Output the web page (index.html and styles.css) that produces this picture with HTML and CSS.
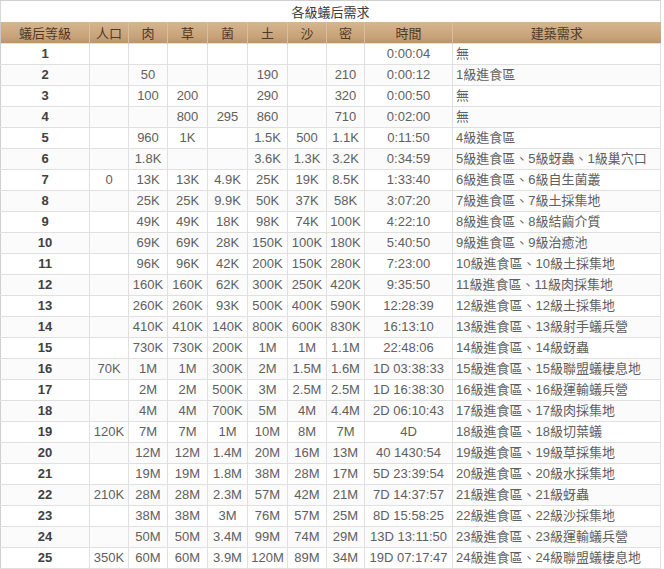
FILE: index.html
```html
<!DOCTYPE html>
<html lang="zh-Hant">
<head>
<meta charset="utf-8">
<title>各級蟻后需求</title>
<link rel="stylesheet" href="styles.css">
</head>
<body>
<table class="req">
  <colgroup>
    <col class="c-lv"><col class="c-n"><col class="c-n"><col class="c-n2"><col class="c-n2"><col class="c-n2"><col class="c-n"><col class="c-h"><col class="c-t"><col class="c-b">
  </colgroup>
  <thead>
    <tr class="title-row"><th colspan="10" class="title">各級蟻后需求</th></tr>
    <tr class="head-row">
      <th>蟻后等級</th><th>人口</th><th>肉</th><th>草</th><th>菌</th><th>土</th><th>沙</th><th>密</th><th>時間</th><th>建築需求</th>
    </tr>
  </thead>
  <tbody>
    <tr><td class="lv">1</td><td></td><td></td><td></td><td></td><td></td><td></td><td></td><td>0:00:04</td><td class="bd">無</td></tr>
    <tr><td class="lv">2</td><td></td><td>50</td><td></td><td></td><td>190</td><td></td><td>210</td><td>0:00:12</td><td class="bd">1級進食區</td></tr>
    <tr><td class="lv">3</td><td></td><td>100</td><td>200</td><td></td><td>290</td><td></td><td>320</td><td>0:00:50</td><td class="bd">無</td></tr>
    <tr><td class="lv">4</td><td></td><td></td><td>800</td><td>295</td><td>860</td><td></td><td>710</td><td>0:02:00</td><td class="bd">無</td></tr>
    <tr><td class="lv">5</td><td></td><td>960</td><td>1K</td><td></td><td>1.5K</td><td>500</td><td>1.1K</td><td>0:11:50</td><td class="bd">4級進食區</td></tr>
    <tr><td class="lv">6</td><td></td><td>1.8K</td><td></td><td></td><td>3.6K</td><td>1.3K</td><td>3.2K</td><td>0:34:59</td><td class="bd">5級進食區、5級蚜蟲、1級巢穴口</td></tr>
    <tr><td class="lv">7</td><td>0</td><td>13K</td><td>13K</td><td>4.9K</td><td>25K</td><td>19K</td><td>8.5K</td><td>1:33:40</td><td class="bd">6級進食區、6級自生菌叢</td></tr>
    <tr><td class="lv">8</td><td></td><td>25K</td><td>25K</td><td>9.9K</td><td>50K</td><td>37K</td><td>58K</td><td>3:07:20</td><td class="bd">7級進食區、7級土採集地</td></tr>
    <tr><td class="lv">9</td><td></td><td>49K</td><td>49K</td><td>18K</td><td>98K</td><td>74K</td><td>100K</td><td>4:22:10</td><td class="bd">8級進食區、8級結繭介質</td></tr>
    <tr><td class="lv">10</td><td></td><td>69K</td><td>69K</td><td>28K</td><td>150K</td><td>100K</td><td>180K</td><td>5:40:50</td><td class="bd">9級進食區、9級治癒池</td></tr>
    <tr><td class="lv">11</td><td></td><td>96K</td><td>96K</td><td>42K</td><td>200K</td><td>150K</td><td>280K</td><td>7:23:00</td><td class="bd">10級進食區、10級土採集地</td></tr>
    <tr><td class="lv">12</td><td></td><td>160K</td><td>160K</td><td>62K</td><td>300K</td><td>250K</td><td>420K</td><td>9:35:50</td><td class="bd">11級進食區、11級肉採集地</td></tr>
    <tr><td class="lv">13</td><td></td><td>260K</td><td>260K</td><td>93K</td><td>500K</td><td>400K</td><td>590K</td><td>12:28:39</td><td class="bd">12級進食區、12級土採集地</td></tr>
    <tr><td class="lv">14</td><td></td><td>410K</td><td>410K</td><td>140K</td><td>800K</td><td>600K</td><td>830K</td><td>16:13:10</td><td class="bd">13級進食區、13級射手蟻兵營</td></tr>
    <tr><td class="lv">15</td><td></td><td>730K</td><td>730K</td><td>200K</td><td>1M</td><td>1M</td><td>1.1M</td><td>22:48:06</td><td class="bd">14級進食區、14級蚜蟲</td></tr>
    <tr><td class="lv">16</td><td>70K</td><td>1M</td><td>1M</td><td>300K</td><td>2M</td><td>1.5M</td><td>1.6M</td><td>1D 03:38:33</td><td class="bd">15級進食區、15級聯盟蟻棲息地</td></tr>
    <tr><td class="lv">17</td><td></td><td>2M</td><td>2M</td><td>500K</td><td>3M</td><td>2.5M</td><td>2.5M</td><td>1D 16:38:30</td><td class="bd">16級進食區、16級運輸蟻兵營</td></tr>
    <tr><td class="lv">18</td><td></td><td>4M</td><td>4M</td><td>700K</td><td>5M</td><td>4M</td><td>4.4M</td><td>2D 06:10:43</td><td class="bd">17級進食區、17級肉採集地</td></tr>
    <tr><td class="lv">19</td><td>120K</td><td>7M</td><td>7M</td><td>1M</td><td>10M</td><td>8M</td><td>7M</td><td>4D</td><td class="bd">18級進食區、18級切葉蟻</td></tr>
    <tr><td class="lv">20</td><td></td><td>12M</td><td>12M</td><td>1.4M</td><td>20M</td><td>16M</td><td>13M</td><td>40 1430:54</td><td class="bd">19級進食區、19級草採集地</td></tr>
    <tr><td class="lv">21</td><td></td><td>19M</td><td>19M</td><td>1.8M</td><td>38M</td><td>28M</td><td>17M</td><td>5D 23:39:54</td><td class="bd">20級進食區、20級水採集地</td></tr>
    <tr><td class="lv">22</td><td>210K</td><td>28M</td><td>28M</td><td>2.3M</td><td>57M</td><td>42M</td><td>21M</td><td>7D 14:37:57</td><td class="bd">21級進食區、21級蚜蟲</td></tr>
    <tr><td class="lv">23</td><td></td><td>38M</td><td>38M</td><td>3M</td><td>76M</td><td>57M</td><td>25M</td><td>8D 15:58:25</td><td class="bd">22級進食區、22級沙採集地</td></tr>
    <tr><td class="lv">24</td><td></td><td>50M</td><td>50M</td><td>3.4M</td><td>99M</td><td>74M</td><td>29M</td><td>13D 13:11:50</td><td class="bd">23級進食區、23級運輸蟻兵營</td></tr>
    <tr><td class="lv">25</td><td>350K</td><td>60M</td><td>60M</td><td>3.9M</td><td>120M</td><td>89M</td><td>34M</td><td>19D 07:17:47</td><td class="bd">24級進食區、24級聯盟蟻棲息地</td></tr>
  </tbody>
</table>
</body>
</html>
```

FILE: styles.css
```css
html, body {
  margin: 0;
  padding: 0;
  background: #ffffff;
}

.req {
  border-collapse: collapse;
  table-layout: fixed;
  width: 661px;
  margin: 0;
  font-family: "Liberation Sans", "Noto Sans CJK TC", sans-serif;
  font-size: 13px;
  color: #606060;
}

.c-lv { width: 89px; }
.c-n { width: 39px; }
.c-n2 { width: 40px; }
.c-h { width: 38px; }
.c-t { width: 88px; }
.c-b { width: 208px; }

.title-row th {
  height: 21px;
  padding: 0;
  border-top: 1px solid #cfcfcf;
  border-left: 1px solid #d8d8d8;
  border-right: 1px solid #d8d8d8;
  font-weight: normal;
  color: #3a3a3a;
  text-align: center;
  vertical-align: middle;
  background: #ffffff;
}

.head-row th {
  height: 21px;
  padding: 0;
  font-weight: normal;
  color: #4e3a26;
  text-align: center;
  vertical-align: middle;
  background: linear-gradient(#d5b690, #c8a279 70%, #bb946b);
  border-left: 1px solid #d9bea0;
  white-space: nowrap;
}

.head-row th:first-child {
  border-left: 1px solid #c9c9c9;
}

tbody td {
  height: 20px;
  padding: 0;
  border: 1px solid #e0e0e0;
  text-align: center;
  vertical-align: middle;
  white-space: nowrap;
  overflow: visible;
  line-height: 20px;
}

tbody tr:nth-child(even) td {
  background: #fcfbfb;
}

tbody td.lv {
  font-weight: bold;
  color: #404040;
  border-left-color: #cfcfcf;
}

tbody td.bd {
  text-align: left;
  padding-left: 3px;
}
```
